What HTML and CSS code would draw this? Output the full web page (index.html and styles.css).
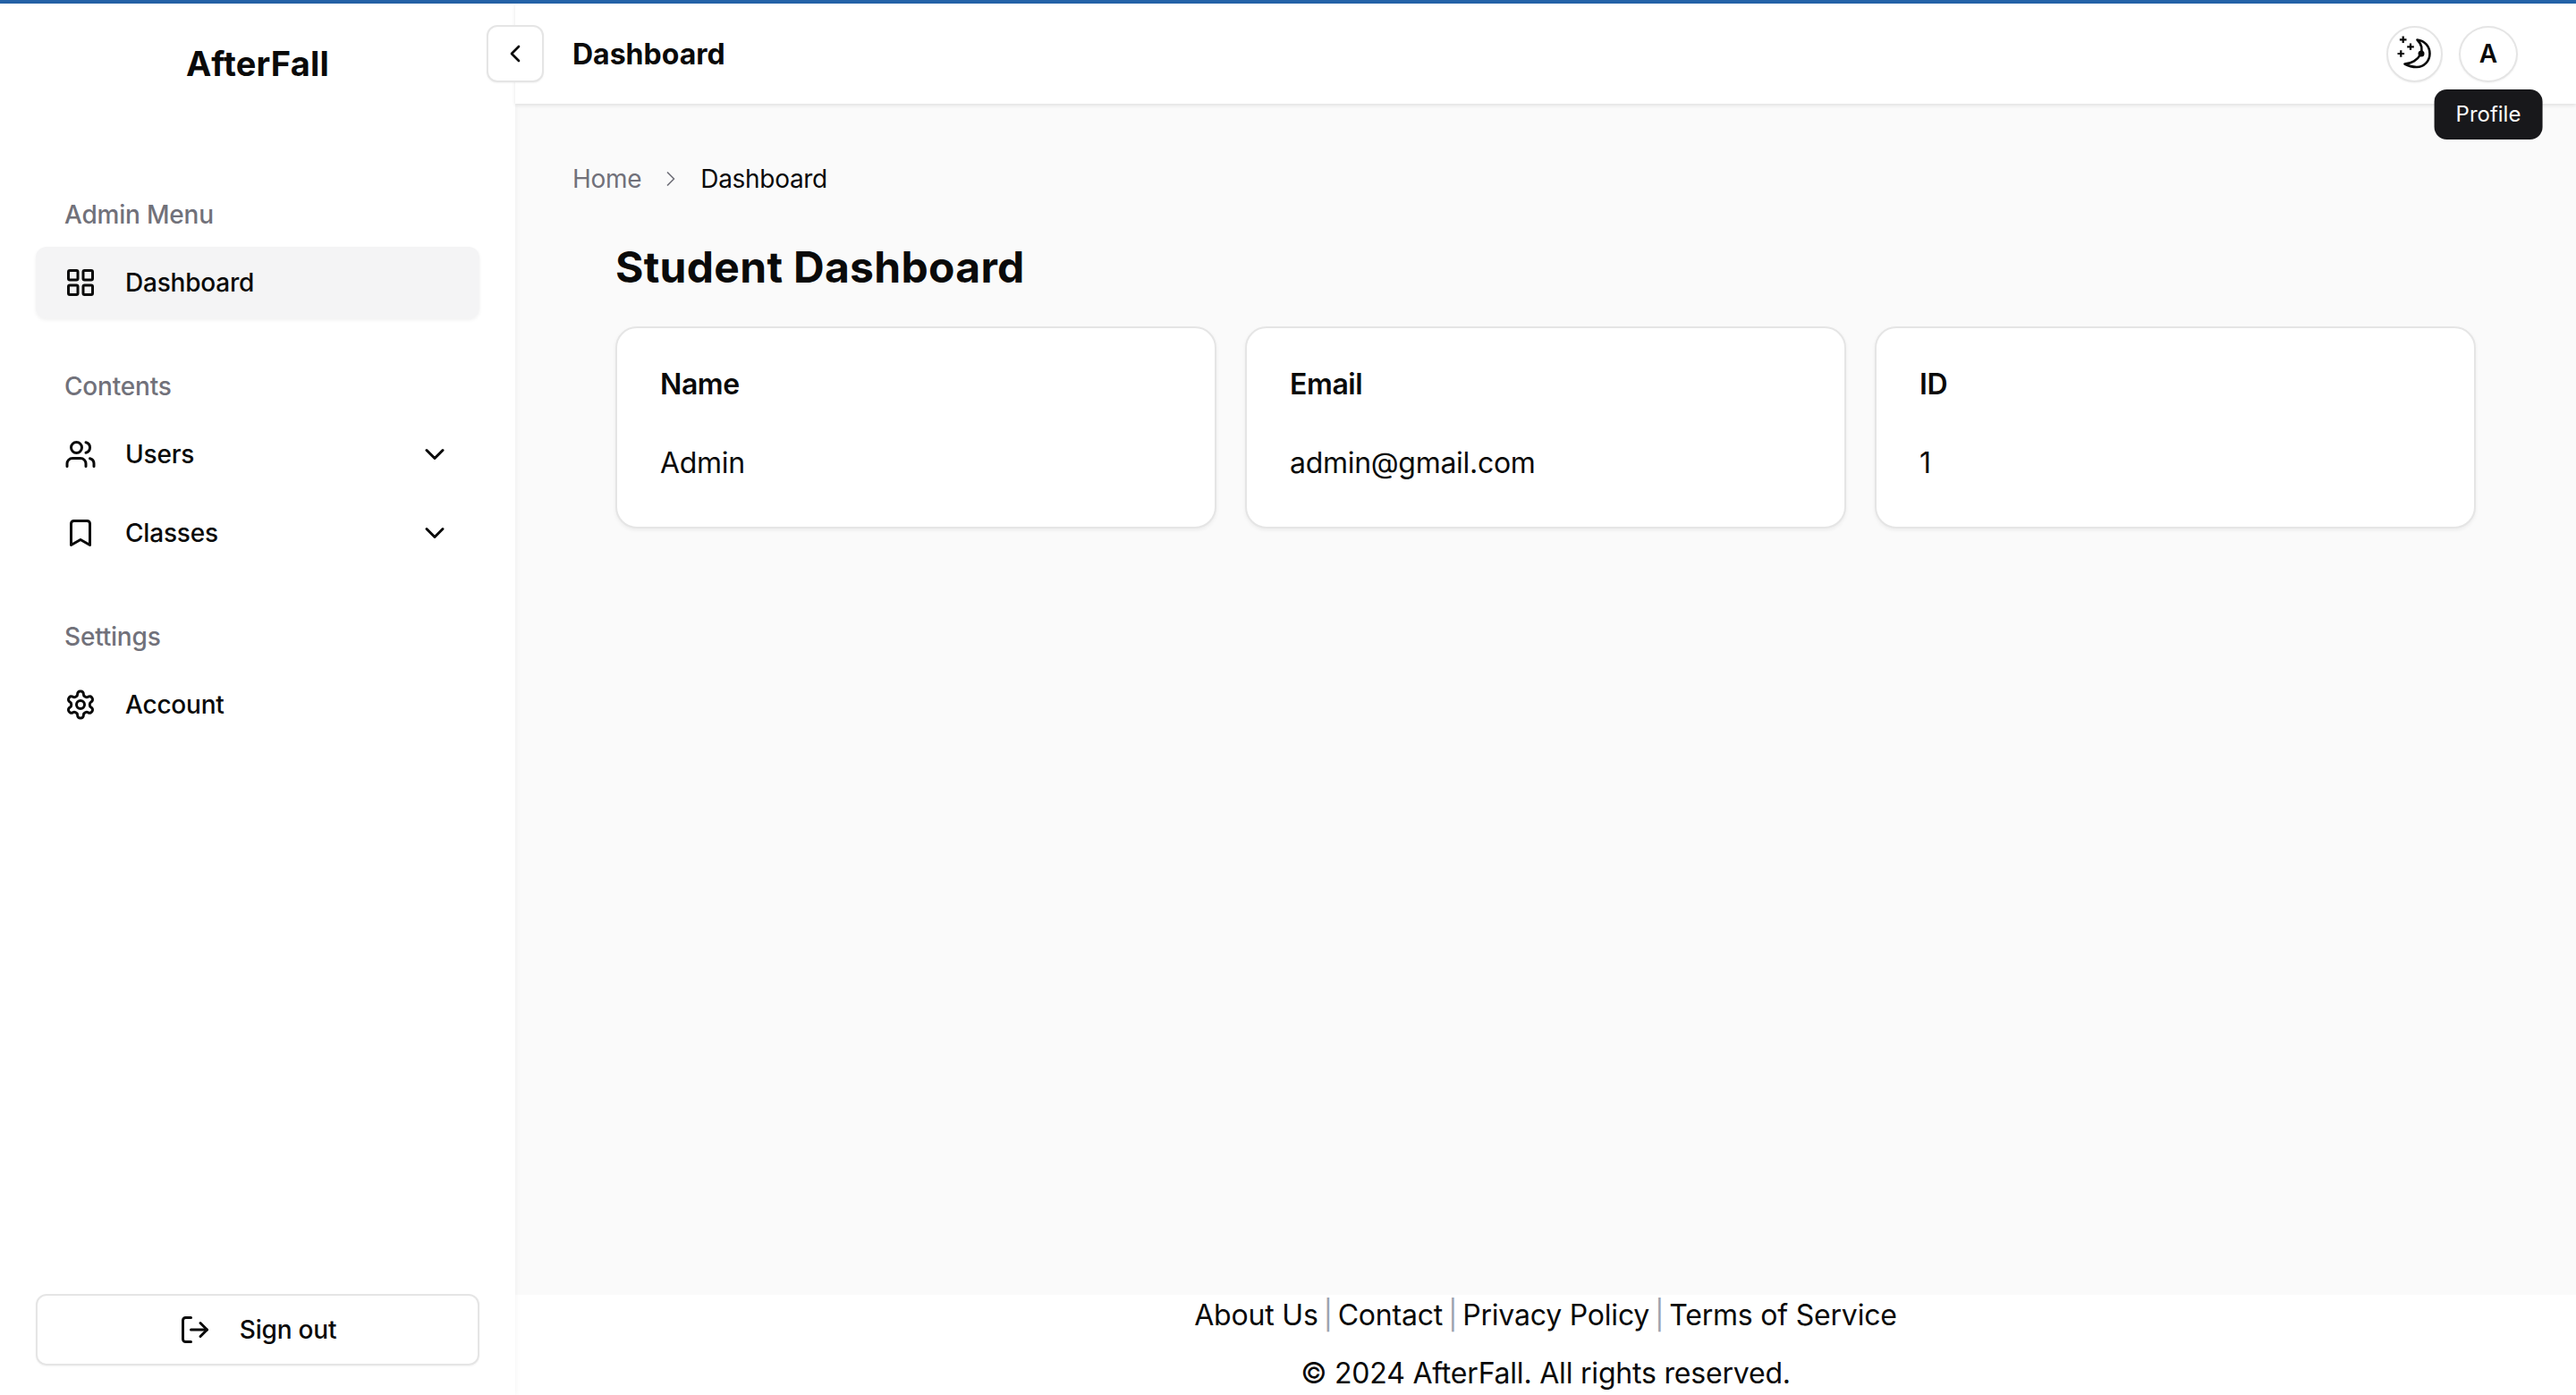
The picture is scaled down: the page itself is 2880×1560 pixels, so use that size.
FILE: index.html
```html
<!DOCTYPE html>
<html>
<head>
    <title>AfterFall - Dashboard</title>
    <link rel="stylesheet" href="styles.css">
</head>
<body>
    <div class="progress"></div>
    <div class="app">
        <aside class="sidebar">
            <div class="logo">AfterFall</div>
            <nav class="nav">
                <div class="group">
                    <p class="group-label">Admin Menu</p>
                    <a class="item active">
                        <svg class="icon" viewBox="0 0 24 24"><rect x="3" y="3" width="7" height="7" rx="1"/><rect x="14" y="3" width="7" height="7" rx="1"/><rect x="14" y="14" width="7" height="7" rx="1"/><rect x="3" y="14" width="7" height="7" rx="1"/></svg>
                        <span>Dashboard</span>
                    </a>
                </div>
                <div class="group">
                    <p class="group-label">Contents</p>
                    <a class="item">
                        <svg class="icon" viewBox="0 0 24 24"><path d="M16 21v-2a4 4 0 0 0-4-4H6a4 4 0 0 0-4 4v2"/><circle cx="9" cy="7" r="4"/><path d="M22 21v-2a4 4 0 0 0-3-3.87"/><path d="M16 3.13a4 4 0 0 1 0 7.75"/></svg>
                        <span>Users</span>
                        <svg class="icon chevron" viewBox="0 0 24 24"><path d="m6 9 6 6 6-6"/></svg>
                    </a>
                    <a class="item">
                        <svg class="icon" viewBox="0 0 24 24"><path d="m19 21-7-4-7 4V5a2 2 0 0 1 2-2h10a2 2 0 0 1 2 2v16z"/></svg>
                        <span>Classes</span>
                        <svg class="icon chevron" viewBox="0 0 24 24"><path d="m6 9 6 6 6-6"/></svg>
                    </a>
                </div>
                <div class="group">
                    <p class="group-label">Settings</p>
                    <a class="item">
                        <svg class="icon" viewBox="0 0 24 24"><path d="M12.22 2h-.44a2 2 0 0 0-2 2v.18a2 2 0 0 1-1 1.73l-.43.25a2 2 0 0 1-2 0l-.15-.08a2 2 0 0 0-2.73.73l-.22.38a2 2 0 0 0 .73 2.73l.15.1a2 2 0 0 1 1 1.72v.51a2 2 0 0 1-1 1.74l-.15.09a2 2 0 0 0-.73 2.73l.22.38a2 2 0 0 0 2.73.73l.15-.08a2 2 0 0 1 2 0l.43.25a2 2 0 0 1 1 1.73V20a2 2 0 0 0 2 2h.44a2 2 0 0 0 2-2v-.18a2 2 0 0 1 1-1.73l.43-.25a2 2 0 0 1 2 0l.15.08a2 2 0 0 0 2.73-.73l.22-.39a2 2 0 0 0-.73-2.73l-.15-.08a2 2 0 0 1-1-1.74v-.5a2 2 0 0 1 1-1.74l.15-.09a2 2 0 0 0 .73-2.73l-.22-.38a2 2 0 0 0-2.73-.73l-.15.08a2 2 0 0 1-2 0l-.43-.25a2 2 0 0 1-1-1.73V4a2 2 0 0 0-2-2z"/><circle cx="12" cy="12" r="3"/></svg>
                        <span>Account</span>
                    </a>
                </div>
            </nav>
            <button class="signout">
                <svg class="icon" viewBox="0 0 24 24"><path d="M9 21H5a2 2 0 0 1-2-2V5a2 2 0 0 1 2-2h4"/><path d="m16 17 5-5-5-5"/><path d="M21 12H9"/></svg>
                <span>Sign out</span>
            </button>
        </aside>

        <div class="main">
            <header class="header">
                <button class="collapse">
                    <svg class="icon small" viewBox="0 0 24 24"><path d="m15 18-6-6 6-6"/></svg>
                </button>
                <h2 class="header-title">Dashboard</h2>
                <div class="header-actions">
                    <button class="round moon">
                        <svg viewBox="0 0 60 60" class="moon-icon">
                            <path class="moon-body" d="M32.500 14.500C41 15.500 46.500 22 46.500 30C46.500 38.500 40 45 32 45C27 45 22 43.500 18.500 41.500C26 41 33 37 36 31C39 25 37 19 32.500 14.500Z"/>
                            <circle class="moon-dot" cx="37" cy="30" r="3.500"/>
                            <path class="moon-star" d="M16.700 10.500v7.600M12.900 14.300h7.600M25 18.500v7.600M21.200 22.300h7.600M14.300 26.200v7.600M10.500 30h7.600"/>
                        </svg>
                    </button>
                    <div class="profile">
                        <button class="round avatar">A</button>
                        <div class="tooltip">Profile</div>
                    </div>
                </div>
            </header>

            <main class="content">
                <div class="breadcrumb">
                    <span class="crumb-home">Home</span>
                    <svg class="icon crumb-sep" viewBox="0 0 24 24"><path d="m9 18 6-6-6-6"/></svg>
                    <span>Dashboard</span>
                </div>
                <section class="page">
                    <h1>Student Dashboard</h1>
                    <div class="cards">
                        <div class="card">
                            <h3>Name</h3>
                            <p>Admin</p>
                        </div>
                        <div class="card">
                            <h3>Email</h3>
                            <p>admin@gmail.com</p>
                        </div>
                        <div class="card">
                            <h3>ID</h3>
                            <p>1</p>
                        </div>
                    </div>
                </section>
            </main>

            <footer class="footer">
                <div class="footer-links">
                    <a>About Us</a> <span class="sep">|</span>
                    <a>Contact</a> <span class="sep">|</span>
                    <a>Privacy Policy</a> <span class="sep">|</span>
                    <a>Terms of Service</a>
                </div>
                <p>&copy; 2024 AfterFall. All rights reserved.</p>
            </footer>
        </div>
    </div>
</body>
</html>
```

FILE: styles.css
```css
* {
    box-sizing: border-box;
}
body {
    font-family: Inter, "Liberation Sans", sans-serif;
    background-color: #fff;
    color: #0a0a0a;
    margin: 0;
    height: 1560px;
    overflow: hidden;
}
p, h1, h2, h3 {
    margin: 0;
}
button {
    font-family: inherit;
    color: inherit;
    background-color: #fff;
    padding: 0;
    cursor: pointer;
}
.progress {
    height: 4px;
    background-color: #2563a8;
}
.app {
    display: flex;
    height: 1556px;
}
.icon {
    width: 36px;
    height: 36px;
    flex-shrink: 0;
    fill: none;
    stroke: currentColor;
    stroke-width: 2;
    stroke-linecap: round;
    stroke-linejoin: round;
}
.icon.small {
    width: 32px;
    height: 32px;
}

/* sidebar */
.sidebar {
    width: 576px;
    flex-shrink: 0;
    display: flex;
    flex-direction: column;
    padding: 0 40px 33px;
    box-shadow: 0 0 6px rgba(0, 0, 0, 0.06);
    position: relative;
    z-index: 1;
}
.logo {
    font-size: 38px;
    font-weight: 700;
    line-height: 44px;
    letter-spacing: 0.2px;
    text-align: center;
    margin-top: 45px;
}
.nav {
    flex: 1;
    display: flex;
    flex-direction: column;
    gap: 56px;
    margin-top: 127px;
}
.group {
    display: flex;
    flex-direction: column;
    gap: 8px;
}
.group-label {
    color: #71717a;
    font-size: 28px;
    line-height: 40px;
    font-weight: 500;
    letter-spacing: -0.2px;
    padding-left: 32px;
    margin-bottom: 8px;
}
.item {
    height: 80px;
    display: flex;
    align-items: center;
    gap: 32px;
    padding: 0 32px;
    border-radius: 12px;
    font-size: 28px;
    font-weight: 500;
    letter-spacing: -0.2px;
}
.item.active {
    background-color: #f4f4f5;
    box-shadow: 0 2px 4px rgba(0, 0, 0, 0.06);
}
.chevron {
    margin-left: auto;
}
.signout {
    height: 80px;
    display: flex;
    align-items: center;
    justify-content: center;
    gap: 32px;
    border: 2px solid #e5e5e5;
    border-radius: 12px;
    box-shadow: 0 1px 2px rgba(0, 0, 0, 0.05);
    font-size: 28px;
    font-weight: 500;
    letter-spacing: -0.2px;
}

/* header */
.main {
    flex: 1;
    min-width: 0;
    display: flex;
    flex-direction: column;
    background-color: #fafafa;
}
.header {
    height: 112px;
    flex-shrink: 0;
    display: flex;
    align-items: center;
    padding: 0 65px 0 64px;
    background-color: #fff;
    box-shadow: 0 2px 4px rgba(0, 0, 0, 0.1);
    position: relative;
    z-index: 2;
}
.collapse {
    position: absolute;
    left: -32px;
    top: 24px;
    width: 64px;
    height: 64px;
    display: flex;
    align-items: center;
    justify-content: center;
    border: 2px solid #e5e5e5;
    border-radius: 12px;
    box-shadow: 0 1px 2px rgba(0, 0, 0, 0.05);
}
.header-title {
    font-size: 32px;
    font-weight: 700;
}
.header-actions {
    margin-left: auto;
    display: flex;
    align-items: center;
    gap: 18px;
}
.round {
    height: 63px;
    border: 2px solid #e5e5e5;
    border-radius: 50%;
    box-shadow: 0 1px 2px rgba(0, 0, 0, 0.05);
    display: flex;
    align-items: center;
    justify-content: center;
}
.moon {
    width: 63px;
}
.moon-icon {
    width: 60px;
    height: 60px;
    flex-shrink: 0;
}
.moon-body {
    fill: #fff;
    stroke: #0a0a0a;
    stroke-width: 2.6;
    stroke-linejoin: round;
}
.moon-dot {
    fill: #0a0a0a;
}
.moon-star {
    fill: none;
    stroke: #0a0a0a;
    stroke-width: 2.2;
}
.avatar {
    width: 66px;
    font-size: 28px;
    font-weight: 600;
}
.profile {
    position: relative;
}
.tooltip {
    position: absolute;
    top: 71px;
    left: 50%;
    transform: translateX(-50%);
    background-color: #18181b;
    color: #fafafa;
    font-size: 24px;
    line-height: 56px;
    padding: 0 24px;
    border-radius: 14px;
    white-space: nowrap;
}

/* content */
.content {
    flex: 1;
    padding: 64px 112px 0 64px;
}
.breadcrumb {
    display: flex;
    align-items: center;
    gap: 19px;
    font-size: 28px;
    line-height: 40px;
    letter-spacing: -0.3px;
}
.crumb-home {
    color: #71717a;
}
.crumb-sep {
    width: 28px;
    height: 28px;
    color: #71717a;
    stroke-width: 1.5;
}
.page {
    padding: 49px 0 0 48px;
}
h1 {
    font-size: 48px;
    line-height: 60px;
    font-weight: 700;
    letter-spacing: 0.3px;
}
.cards {
    display: grid;
    grid-template-columns: repeat(3, 1fr);
    gap: 32px;
    margin-top: 36px;
}
.card {
    height: 226px;
    background-color: #fff;
    border: 2px solid #e5e5e5;
    border-radius: 24px;
    padding: 43px 48px;
    box-shadow: 0 2px 4px rgba(0, 0, 0, 0.06);
}
.card h3 {
    font-size: 32px;
    line-height: 40px;
    font-weight: 600;
    letter-spacing: -0.4px;
}
.card p {
    font-size: 32px;
    line-height: 40px;
    letter-spacing: -0.3px;
    margin-top: 48px;
}

/* footer */
.footer {
    height: 112px;
    flex-shrink: 0;
    background-color: #fff;
    text-align: center;
    font-size: 32px;
    letter-spacing: -0.2px;
    position: relative;
}
.footer-links {
    line-height: 48px;
    margin-top: -1px;
}
.footer p {
    line-height: 48px;
    margin-top: 17px;
}
.sep {
    color: #9ca3af;
    margin: 0 -3px;
}
```
